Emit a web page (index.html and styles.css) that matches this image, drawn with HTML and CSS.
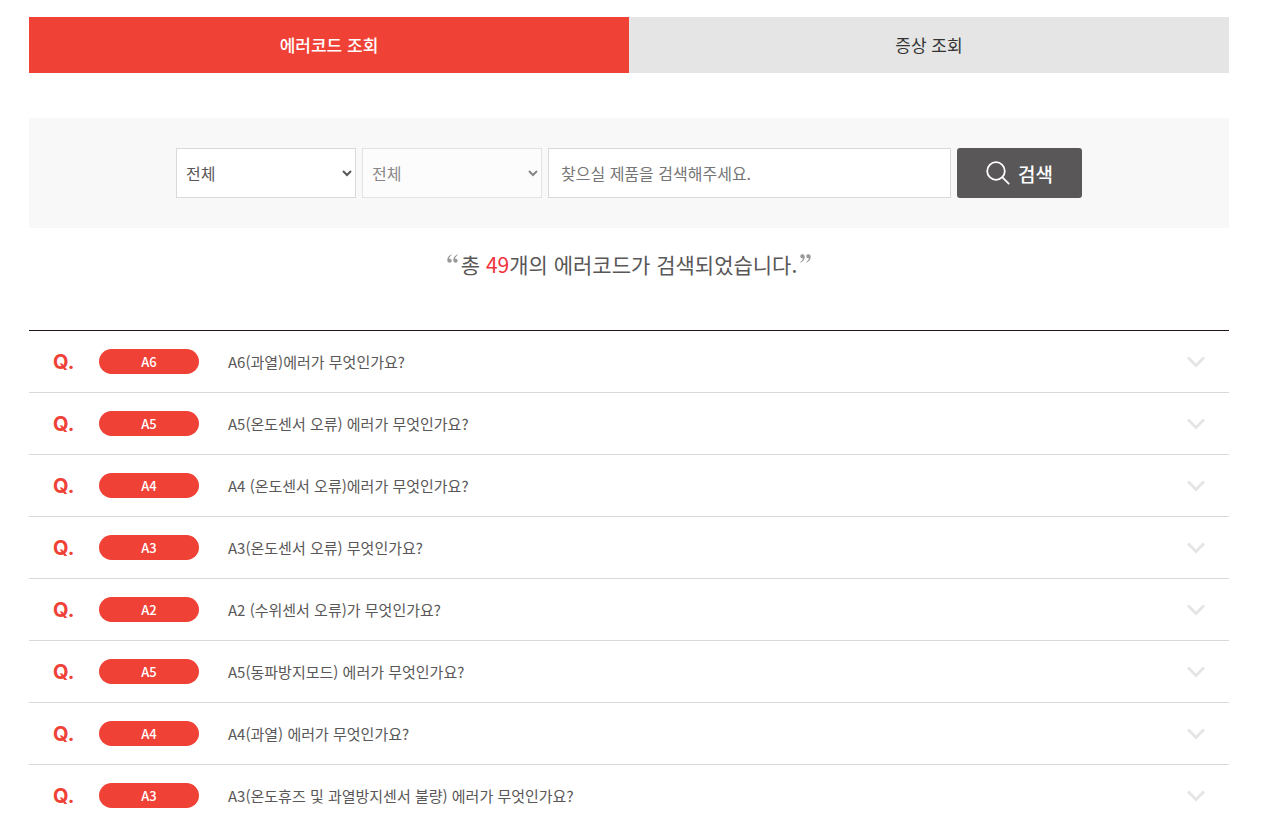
FILE: index.html
```html
<!DOCTYPE html>
<html lang="ko">
<head>
<meta charset="utf-8">
<meta name="viewport" content="width=device-width, initial-scale=1">
<title>에러코드 조회</title>
<link rel="stylesheet" href="styles.css">
</head>
<body>
<svg class="defs" aria-hidden="true"><symbol id="chevron" viewBox="0 0 20 12"><path d="M2 1.500 10 9.500l8-8" fill="none" stroke="currentColor" stroke-width="3"/></symbol></svg>
<main class="page">
  <nav class="tabs">
    <a class="tab tab-active" href="#error">에러코드 조회</a>
    <a class="tab" href="#symptom">증상 조회</a>
  </nav>
  <form class="search">
    <select class="field select" aria-label="제품 분류"><option>전체</option></select>
    <select class="field select" aria-label="세부 분류" disabled><option>전체</option></select>
    <input class="field keyword" type="text" aria-label="제품 검색" placeholder="찾으실 제품을 검색해주세요.">
    <button class="search-button" type="button">
      <svg class="search-icon" viewBox="0 0 24 24" aria-hidden="true"><circle cx="10" cy="10" r="8.800"/><path d="m16.200 16.200 7 7"/></svg>
      <span>검색</span>
    </button>
  </form>
  <p class="summary">
    <svg class="quote" viewBox="0 0 11 9" aria-hidden="true"><path id="mark" d="M4.800.3C2.200 1.300.3 3.300.3 6c0 1.700.9 2.700 2.300 2.700 1.200 0 2.100-.8 2.100-2s-.8-2-2-2l-.7.1c.2-1.500 1.300-2.800 2.900-4z"/><use href="#mark" x="6"/></svg>
    <span>총 <em class="count">49</em>개의 에러코드가 검색되었습니다.</span>
    <svg class="quote quote-end" viewBox="0 0 11 9" aria-hidden="true"><use href="#mark"/><use href="#mark" x="6"/></svg>
  </p>
  <ul class="list">
    <li><button class="row" type="button"><span class="q">Q.</span><span class="code">A6</span><span class="question">A6(과열)에러가 무엇인가요?</span><svg class="chevron"><use href="#chevron"/></svg></button></li>
    <li><button class="row" type="button"><span class="q">Q.</span><span class="code">A5</span><span class="question">A5(온도센서 오류) 에러가 무엇인가요?</span><svg class="chevron"><use href="#chevron"/></svg></button></li>
    <li><button class="row" type="button"><span class="q">Q.</span><span class="code">A4</span><span class="question">A4 (온도센서 오류)에러가 무엇인가요?</span><svg class="chevron"><use href="#chevron"/></svg></button></li>
    <li><button class="row" type="button"><span class="q">Q.</span><span class="code">A3</span><span class="question">A3(온도센서 오류) 무엇인가요?</span><svg class="chevron"><use href="#chevron"/></svg></button></li>
    <li><button class="row" type="button"><span class="q">Q.</span><span class="code">A2</span><span class="question">A2 (수위센서 오류)가 무엇인가요?</span><svg class="chevron"><use href="#chevron"/></svg></button></li>
    <li><button class="row" type="button"><span class="q">Q.</span><span class="code">A5</span><span class="question">A5(동파방지모드) 에러가 무엇인가요?</span><svg class="chevron"><use href="#chevron"/></svg></button></li>
    <li><button class="row" type="button"><span class="q">Q.</span><span class="code">A4</span><span class="question">A4(과열) 에러가 무엇인가요?</span><svg class="chevron"><use href="#chevron"/></svg></button></li>
    <li><button class="row" type="button"><span class="q">Q.</span><span class="code">A3</span><span class="question">A3(온도휴즈 및 과열방지센서 불량) 에러가 무엇인가요?</span><svg class="chevron"><use href="#chevron"/></svg></button></li>
  </ul>
</main>
</body>
</html>
```

FILE: styles.css
```css
* { box-sizing: border-box; }
body, button, input, select { font-family: "Noto Sans CJK KR", sans-serif; }
body { margin: 0; background: #fff; color: #595757; }
.defs { display: none; }
.page { padding: 17px 53px 0 29px; }

.tabs { display: flex; }
.tab {
  flex: 1;
  padding: 16px;
  background: #e5e5e5;
  color: #333;
  font-size: 17px;
  line-height: 24px;
  text-align: center;
  text-decoration: none;
}
.tab-active { background: #f04137; color: #fff; font-weight: 500; }

.search {
  display: flex;
  justify-content: center;
  gap: 6px;
  margin-top: 45px;
  padding: 30px;
  background: #f8f8f8;
}
.field {
  height: 50px;
  border: 1px solid #d9d9d9;
  border-radius: 0;
  background: #fff;
  color: #595757;
}
.select { width: 180px; padding: 0 5px; font-size: 16px; }
.select:disabled { color: #595757; opacity: .7; }
.keyword { flex: 0 1 403px; min-width: 0; padding: 0 12px; font-size: 16px; }
.keyword::placeholder { color: #757575; }
.search-button {
  display: flex;
  align-items: center;
  justify-content: center;
  gap: 8px;
  width: 125px;
  padding: 0;
  border: 0;
  border-radius: 3px;
  background: #595757;
  color: #fff;
  font-size: 19px;
  font-weight: 500;
}
.search-icon { width: 24px; height: 24px; fill: none; stroke: #fff; stroke-width: 1.800; }

.summary {
  display: flex;
  justify-content: center;
  gap: 3px;
  margin: 0;
  padding: 20px 0 50px;
  font-size: 21px;
  line-height: 32px;
}
.count { color: #f0323c; font-style: normal; }
.quote { width: 11px; height: 9px; margin-top: 6px; fill: #999; }
.quote-end { transform: rotate(180deg); }

.list { margin: 0; padding: 0; border-top: 1px solid #231519; list-style: none; }
.list li + li { border-top: 1px solid #d9d9d9; }
.row {
  display: flex;
  align-items: center;
  width: 100%;
  height: 61px;
  padding: 0 23px 0 24px;
  border: 0;
  background: none;
  color: #595757;
  text-align: left;
}
.q { width: 46px; color: #f04137; font: bold 20px/24px Inter, sans-serif; }
.code {
  width: 100px;
  margin-right: 29px;
  border-radius: 13px;
  background: #f04137;
  color: #fff;
  font-size: 13px;
  font-weight: 500;
  line-height: 25px;
  text-align: center;
}
.question { flex: 1; font-size: 15px; line-height: 24px; }
.chevron { width: 20px; height: 12px; color: #e5e5e5; }
```
